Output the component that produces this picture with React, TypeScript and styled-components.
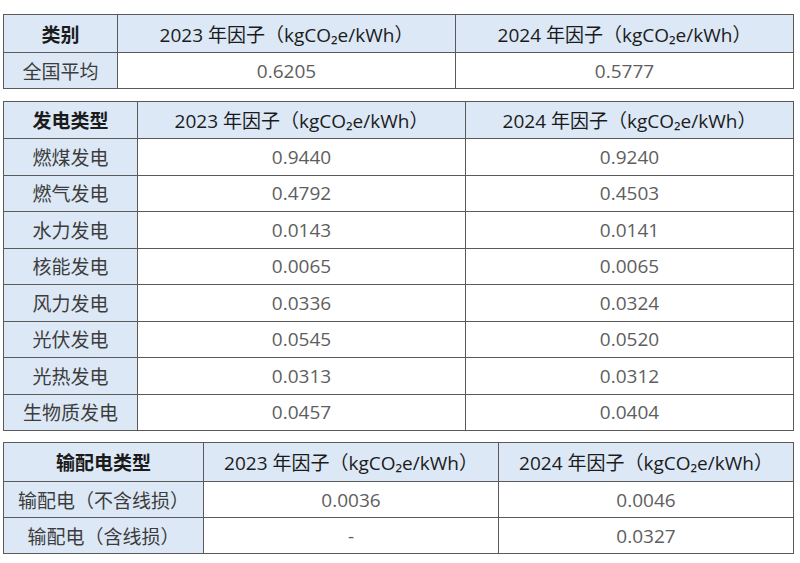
import React from "react";
import styled, { createGlobalStyle } from "styled-components";

const Global = createGlobalStyle`
  html, body { margin: 0; padding: 0; background: #ffffff; }
  body { font-family: "Open Sans", "Noto Sans CJK SC", sans-serif; }
`;

const Page = styled.div`
  width: 800px;
  height: 563px;
  box-sizing: border-box;
  padding: 14px 7px 0 3px;
  display: flex;
  flex-direction: column;
  gap: 12px;
`;

const Table = styled.table<{ $gap?: number }>`
  width: 790px;
  border-collapse: collapse;
  table-layout: fixed;
  font-family: "Open Sans", "Noto Sans CJK SC", sans-serif;
  font-size: 19px;
  margin-top: ${(p) => (p.$gap ? p.$gap : 0)}px;
`;

const Col = styled.col<{ $w: number }>`
  width: ${(p) => p.$w}px;
`;

const HeadCell = styled.th<{ $bold?: boolean; $h: number }>`
  height: ${(p) => p.$h}px;
  padding: 0;
  border: 1px solid #5a5a5a;
  background: #dce8f6;
  color: #1b1b1b;
  font-weight: ${(p) => (p.$bold ? 700 : 400)};
  text-align: center;
  vertical-align: middle;
  white-space: nowrap;
  box-sizing: border-box;
`;

const LabelCell = styled.td<{ $h: number }>`
  height: ${(p) => p.$h}px;
  padding: 0;
  border: 1px solid #5a5a5a;
  background: #dce8f6;
  color: #3c3c3c;
  text-align: center;
  vertical-align: middle;
  white-space: nowrap;
  box-sizing: border-box;
`;

const ValueCell = styled.td<{ $h: number }>`
  height: ${(p) => p.$h}px;
  padding: 0;
  border: 1px solid #5a5a5a;
  background: #ffffff;
  color: #5e5e5e;
  text-align: center;
  vertical-align: middle;
  white-space: nowrap;
  box-sizing: border-box;
`;

type TableData = {
  widths: number[];
  head: string;
  headH: number;
  rowH: number;
  rows: [string, string, string][];
  gap?: number;
};

const H23 = "2023 年因子（kgCO₂e/kWh）";
const H24 = "2024 年因子（kgCO₂e/kWh）";

const tables: TableData[] = [
  {
    widths: [114, 338, 338],
    head: "类别",
    headH: 38,
    rowH: 36,
    rows: [["全国平均", "0.6205", "0.5777"]],
  },
  {
    widths: [134, 328, 328],
    head: "发电类型",
    headH: 37,
    rowH: 36.5,
    rows: [
      ["燃煤发电", "0.9440", "0.9240"],
      ["燃气发电", "0.4792", "0.4503"],
      ["水力发电", "0.0143", "0.0141"],
      ["核能发电", "0.0065", "0.0065"],
      ["风力发电", "0.0336", "0.0324"],
      ["光伏发电", "0.0545", "0.0520"],
      ["光热发电", "0.0313", "0.0312"],
      ["生物质发电", "0.0457", "0.0404"],
    ],
  },
  {
    widths: [200, 295, 295],
    head: "输配电类型",
    headH: 39,
    rowH: 36,
    gap: -1,
    rows: [
      ["输配电（不含线损）", "0.0036", "0.0046"],
      ["输配电（含线损）", "-", "0.0327"],
    ],
  },
];

function FactorTable({ t }: { t: TableData }) {
  return (
    <Table $gap={t.gap}>
      <colgroup>
        {t.widths.map((w, i) => (
          <Col key={i} $w={w} />
        ))}
      </colgroup>
      <thead>
        <tr>
          <HeadCell $bold $h={t.headH}>{t.head}</HeadCell>
          <HeadCell $h={t.headH}>{H23}</HeadCell>
          <HeadCell $h={t.headH}>{H24}</HeadCell>
        </tr>
      </thead>
      <tbody>
        {t.rows.map((r) => (
          <tr key={r[0]}>
            <LabelCell $h={t.rowH}>{r[0]}</LabelCell>
            <ValueCell $h={t.rowH}>{r[1]}</ValueCell>
            <ValueCell $h={t.rowH}>{r[2]}</ValueCell>
          </tr>
        ))}
      </tbody>
    </Table>
  );
}

export default function App() {
  return (
    <>
      <Global />
      <Page>
        {tables.map((t) => (
          <FactorTable key={t.head} t={t} />
        ))}
      </Page>
    </>
  );
}
